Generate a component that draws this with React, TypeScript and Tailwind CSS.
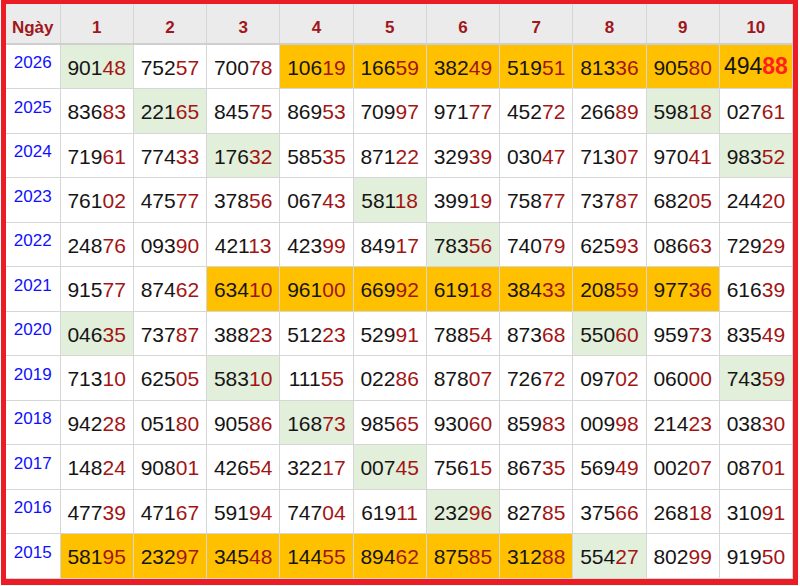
const rows: [string, string][] = [
  ["2026", "90148:g 75257 70078 10619:o 16659:o 38249:o 51951:o 81336:o 90580:o 49488:x"],
  ["2025", "83683 22165:g 84575 86953 70997 97177 45272 26689 59818:g 02761"],
  ["2024", "71961 77433 17632:g 58535 87122 32939 03047 71307 97041 98352:g"],
  ["2023", "76102 47577 37856 06743 58118:g 39919 75877 73787 68205 24420"],
  ["2022", "24876 09390 42113 42399 84917 78356:g 74079 62593 08663 72929"],
  ["2021", "91577 87462 63410:o 96100:o 66992:o 61918:o 38433:o 20859:o 97736:o 61639"],
  ["2020", "04635:g 73787 38823 51223 52991 78854 87368 55060:g 95973 83549"],
  ["2019", "71310 62505 58310:g 11155 02286 87807 72672 09702 06000 74359:g"],
  ["2018", "94228 05180 90586 16873:g 98565 93060 85983 00998 21423 03830"],
  ["2017", "14824 90801 42654 32217 00745:g 75615 86735 56949 00207 08701"],
  ["2016", "47739 47167 59194 74704 61911 23296:g 82785 37566 26818 31091"],
  ["2015", "58195:o 23297:o 34548:o 14455:o 89462:o 87585:o 31288:o 55427:g 80299 91950"],
];

const heads = ["1", "2", "3", "4", "5", "6", "7", "8", "9", "10"];

function Cell({ raw }: { raw: string }) {
  const [num, mark] = raw.split(":");
  const bg =
    mark === "o" ? "bg-[#ffc000]" : mark === "x" ? "bg-[#ffc000]" : mark === "g" ? "bg-[#e2efda]" : "bg-white";
  if (mark === "x") {
    return (
      <td className={`${bg} border border-[#d6d6d6] text-center align-middle h-[44.5px] p-0`}>
        <span className="text-[23px] text-[#151515]">{num.slice(0, 3)}</span>
        <span className="text-[23px] font-bold text-[#ff1f1f]">{num.slice(3)}</span>
      </td>
    );
  }
  return (
    <td className={`${bg} border border-[#d6d6d6] text-center align-middle h-[44.5px] p-0 pt-[2px] text-[21px]`}>
      <span className="text-[#151515]">{num.slice(0, 3)}</span>
      <span className="text-[#a31515]">{num.slice(3)}</span>
    </td>
  );
}

export default function App() {
  return (
    <div className="w-[800px] h-[586px] bg-white pl-px pr-[2px] pb-px font-['Liberation_Sans',Arial,sans-serif]">
      <div className="h-full border-[#ec1c24] border-t-4 border-x-[5px] border-b-[6px] overflow-hidden">
        <table className="w-full table-fixed border-collapse">
          <colgroup>
            <col className="w-[54px]" />
            {heads.map((h) => (
              <col key={h} />
            ))}
          </colgroup>
          <thead>
            <tr className="bg-[#ebebeb]">
              <th className="h-[40px] border-x border-[#d6d6d6] border-b-2 border-b-[#cfcfcf] pt-2 text-[17px] font-bold text-[#a0161c] border-l-0 border-t-0">
                Ngày
              </th>
              {heads.map((h) => (
                <th
                  key={h}
                  className="h-[40px] border-x border-[#d6d6d6] border-b-2 border-b-[#cfcfcf] pt-2 text-[17px] font-bold text-[#a0161c] border-t-0"
                >
                  {h}
                </th>
              ))}
            </tr>
          </thead>
          <tbody>
            {rows.map(([year, cells]) => (
              <tr key={year}>
                <td className="h-[44.5px] border border-[#d6d6d6] border-l-0 bg-white text-center align-middle p-0 pb-[7px] text-[17px] text-[#1010ff]">
                  {year}
                </td>
                {cells.split(" ").map((c, i) => (
                  <Cell key={i} raw={c} />
                ))}
              </tr>
            ))}
          </tbody>
        </table>
      </div>
    </div>
  );
}
